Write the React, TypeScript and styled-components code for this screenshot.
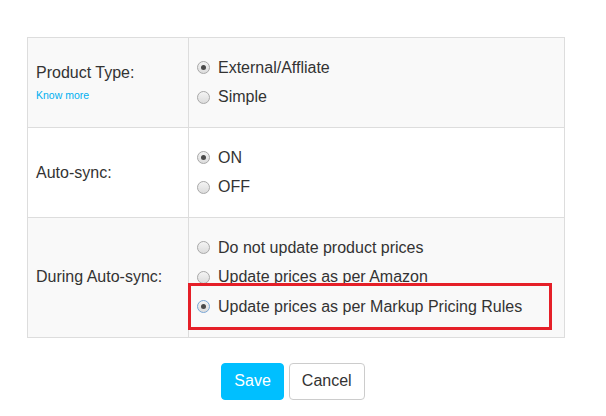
import React from "react";
import styled, { createGlobalStyle } from "styled-components";

const GlobalStyle = createGlobalStyle`
  body {
    margin: 0;
    background: #ffffff;
    font-family: "Liberation Sans", Arial, sans-serif;
    color: #333333;
  }
`;

const Page = styled.div`
  width: 606px;
  height: 416px;
  padding: 37px 0 0 27px;
  box-sizing: border-box;
`;

const Table = styled.table`
  width: 538px;
  border-collapse: collapse;
  border: 1px solid #dddddd;
`;

const Row = styled.tr<{ striped?: boolean }>`
  background: ${(p) => (p.striped ? "#f9f9f9" : "#ffffff")};
`;

const LabelCell = styled.td`
  width: 161px;
  box-sizing: border-box;
  border: 1px solid #dddddd;
  padding: 8px 8px;
  vertical-align: middle;
  font-size: 16px;
`;

const OptionsCell = styled.td`
  border: 1px solid #dddddd;
  padding: 15px 8px;
  vertical-align: middle;
`;

const KnowMore = styled.a`
  display: block;
  margin-top: 7px;
  font-size: 10.5px;
  color: #00aff0;
  text-decoration: none;
`;

const Option = styled.label<{ highlighted?: boolean }>`
  position: relative;
  display: flex;
  align-items: center;
  gap: 8px;
  height: 29.5px;
  font-size: 16px;
  color: #333333;

  ${(p) =>
    p.highlighted &&
    `
    &::after {
      content: "";
      position: absolute;
      left: -9px;
      top: -9px;
      width: 364px;
      height: 47px;
      box-sizing: border-box;
      border: 3px solid #e51f28;
      pointer-events: none;
    }
  `}
`;

const Radio = styled.span<{ checked?: boolean; focused?: boolean }>`
  position: relative;
  width: 13px;
  height: 13px;
  box-sizing: border-box;
  border-radius: 50%;
  border: 1px solid ${(p) => (p.focused ? "#7aa7d6" : "#a9a9a9")};
  background: linear-gradient(#f4f4f4, #dcdcdc);
  flex-shrink: 0;

  &::after {
    content: "";
    display: ${(p) => (p.checked ? "block" : "none")};
    position: absolute;
    left: 3px;
    top: 3px;
    width: 5px;
    height: 5px;
    border-radius: 50%;
    background: #4a4a4a;
  }
`;

const Actions = styled.div`
  display: flex;
  justify-content: center;
  gap: 5px;
  width: 532px;
  margin-top: 25px;
`;

const Button = styled.button<{ primary?: boolean }>`
  height: 37px;
  padding: 0 12px;
  font-family: "Liberation Sans", Arial, sans-serif;
  font-size: 16px;
  border-radius: 4px;
  border: 1px solid ${(p) => (p.primary ? "#00bfff" : "#cccccc")};
  background: ${(p) => (p.primary ? "#00bfff" : "#ffffff")};
  color: ${(p) => (p.primary ? "#ffffff" : "#333333")};
`;

type Opt = { label: string; checked?: boolean; highlighted?: boolean };

function Options({ items }: { items: Opt[] }) {
  return (
    <>
      {items.map((o) => (
        <Option key={o.label} highlighted={o.highlighted}>
          <Radio checked={o.checked} focused={o.highlighted} />
          {o.label}
        </Option>
      ))}
    </>
  );
}

export default function App() {
  return (
    <Page>
      <GlobalStyle />
      <Table>
        <tbody>
          <Row striped>
            <LabelCell>
              Product Type:
              <KnowMore href="#">Know more</KnowMore>
            </LabelCell>
            <OptionsCell>
              <Options
                items={[
                  { label: "External/Affliate", checked: true },
                  { label: "Simple" },
                ]}
              />
            </OptionsCell>
          </Row>
          <Row>
            <LabelCell>Auto-sync:</LabelCell>
            <OptionsCell>
              <Options items={[{ label: "ON", checked: true }, { label: "OFF" }]} />
            </OptionsCell>
          </Row>
          <Row striped>
            <LabelCell>During Auto-sync:</LabelCell>
            <OptionsCell>
              <Options
                items={[
                  { label: "Do not update product prices" },
                  { label: "Update prices as per Amazon" },
                  {
                    label: "Update prices as per Markup Pricing Rules",
                    checked: true,
                    highlighted: true,
                  },
                ]}
              />
            </OptionsCell>
          </Row>
        </tbody>
      </Table>
      <Actions>
        <Button primary>Save</Button>
        <Button>Cancel</Button>
      </Actions>
    </Page>
  );
}
